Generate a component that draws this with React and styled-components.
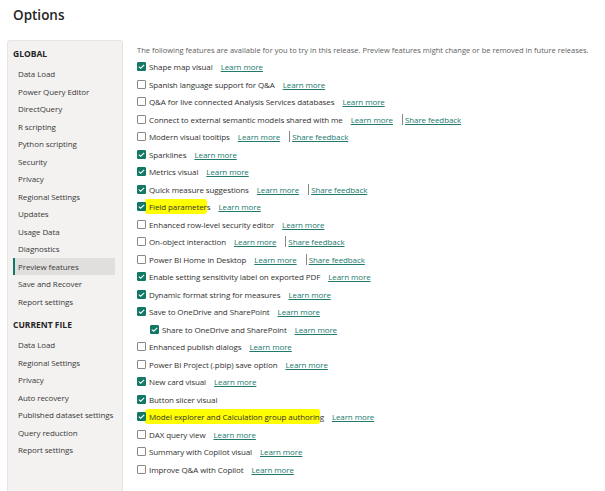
import styled, { createGlobalStyle } from "styled-components";

const GlobalStyle = createGlobalStyle`
  body {
    margin: 0;
    background: #ffffff;
    font-family: "Open Sans", "Noto Sans", sans-serif;
  }
`;

const globalItems = [
  "Data Load",
  "Power Query Editor",
  "DirectQuery",
  "R scripting",
  "Python scripting",
  "Security",
  "Privacy",
  "Regional Settings",
  "Updates",
  "Usage Data",
  "Diagnostics",
  "Preview features",
  "Save and Recover",
  "Report settings",
];

const fileItems = [
  "Data Load",
  "Regional Settings",
  "Privacy",
  "Auto recovery",
  "Published dataset settings",
  "Query reduction",
  "Report settings",
];

// on = checked, learn / feedback = links, indent = nested row, mark = highlighted part
const features = [
  { label: "Shape map visual", on: true, learn: true },
  { label: "Spanish language support for Q&A", learn: true },
  { label: "Q&A for live connected Analysis Services databases", learn: true },
  { label: "Connect to external semantic models shared with me", learn: true, feedback: true },
  { label: "Modern visual tooltips", learn: true, feedback: true },
  { label: "Sparklines", on: true, learn: true },
  { label: "Metrics visual", on: true, learn: true },
  { label: "Quick measure suggestions", on: true, learn: true, feedback: true },
  { label: "Field parameters", on: true, learn: true, mark: ["Field parameter", "s"] },
  { label: "Enhanced row-level security editor", learn: true },
  { label: "On-object interaction", learn: true, feedback: true },
  { label: "Power BI Home in Desktop", learn: true, feedback: true },
  { label: "Enable setting sensitivity label on exported PDF", on: true, learn: true },
  { label: "Dynamic format string for measures", on: true, learn: true },
  { label: "Save to OneDrive and SharePoint", on: true, learn: true },
  { label: "Share to OneDrive and SharePoint", on: true, learn: true, indent: true },
  { label: "Enhanced publish dialogs", learn: true },
  { label: "Power BI Project (.pbip) save option", learn: true },
  { label: "New card visual", on: true, learn: true },
  { label: "Button slicer visual", on: true },
  {
    label: "Model explorer and Calculation group authoring",
    on: true,
    learn: true,
    mark: ["Model explorer and Calculation group authorin", "g"],
  },
  { label: "DAX query view", learn: true },
  { label: "Summary with Copilot visual", learn: true },
  { label: "Improve Q&A with Copilot", learn: true },
];

const Page = styled.div`
  width: 605px;
  height: 491px;
  overflow: hidden;
  display: flex;
  flex-direction: column;
`;

const Title = styled.h1`
  margin: 0;
  height: 40px;
  padding: 5px 0 0 13px;
  box-sizing: border-box;
  font-size: 13.5px;
  font-weight: 600;
  color: #252423;
  line-height: 20px;
`;

const Body = styled.div`
  flex: 1;
  display: flex;
  min-height: 0;
`;

const Sidebar = styled.nav`
  width: 116px;
  margin-left: 7px;
  flex-shrink: 0;
  background: #f3f2f1;
  border: 1px solid #e6e5e4;
  border-radius: 3px 3px 0 0;
  box-sizing: border-box;
  padding-top: 4px;
  height: 470px;
`;

const SectionHead = styled.div`
  font-size: 8.5px;
  font-weight: 700;
  color: #252423;
  padding-left: 5px;
  height: 18px;
  line-height: 18px;
  margin-top: ${(p) => p.$top || 0}px;
  margin-bottom: 2px;
`;

const NavItem = styled.div`
  margin-left: 5px;
  margin-right: 7px;
  height: 17.5px;
  line-height: 17.5px;
  font-size: 8px;
  letter-spacing: -0.1px;
  white-space: nowrap;
  color: #3b3a39;
  padding-left: ${(p) => (p.$active ? 3 : 5)}px;
  background: ${(p) => (p.$active ? "#e1dfdd" : "transparent")};
  border-left: ${(p) => (p.$active ? "2px solid #117865" : "none")};
`;

const Main = styled.main`
  flex: 1;
  padding: 2px 0 0 14px;
`;

const Intro = styled.p`
  margin: 0;
  height: 16px;
  line-height: 16px;
  font-size: 7.5px;
  color: #605e5c;
  white-space: nowrap;
`;

const Row = styled.div`
  height: 17.5px;
  display: flex;
  align-items: center;
  padding-left: ${(p) => (p.$indent ? 13 : 0)}px;
  font-size: 8px;
  letter-spacing: -0.1px;
  color: #323130;
  white-space: nowrap;
`;

const Box = styled.span`
  width: 9px;
  height: 9px;
  flex-shrink: 0;
  box-sizing: border-box;
  border: 1px solid ${(p) => (p.$on ? "#117865" : "#8a8886")};
  background: ${(p) => (p.$on ? "#117865" : "#fff")};
  border-radius: 1px;
  margin-right: 3px;
  display: flex;
  align-items: center;
  justify-content: center;
  position: relative;
  z-index: 1;
`;

const Label = styled.span`
  margin-right: 8px;
`;

const Mark = styled.span`
  background: #ffff00;
  margin-left: -4px;
  padding-left: 4px;
  padding-top: 2px;
  padding-bottom: 2px;
  border-radius: 3px;
`;

const Link = styled.a`
  color: #227a6d;
  text-decoration: underline;
  text-underline-offset: 1px;
  cursor: pointer;
`;

const Divider = styled.span`
  width: 1px;
  height: 11px;
  background: #8a8886;
  margin: 0 2px 0 9px;
`;

const Check = () => (
  <svg width="7" height="5" viewBox="0 0 7 5">
    <path d="M0.8 2.6 L2.7 4.2 L6.2 0.8" fill="none" stroke="#fff" strokeWidth="1.1" />
  </svg>
);

const Feature = ({ f }) => (
  <Row $indent={f.indent}>
    <Box $on={f.on}>{f.on && <Check />}</Box>
    <Label>
      {f.mark ? (
        <>
          <Mark>{f.mark[0]}</Mark>
          {f.mark[1]}
        </>
      ) : (
        f.label
      )}
    </Label>
    {f.learn && <Link>Learn more</Link>}
    {f.feedback && (
      <>
        <Divider />
        <Link>Share feedback</Link>
      </>
    )}
  </Row>
);

export default function App() {
  return (
    <Page>
      <GlobalStyle />
      <Title>Options</Title>
      <Body>
        <Sidebar>
          <SectionHead>GLOBAL</SectionHead>
          {globalItems.map((it) => (
            <NavItem key={"g" + it} $active={it === "Preview features"}>
              {it}
            </NavItem>
          ))}
          <SectionHead $top={6}>CURRENT FILE</SectionHead>
          {fileItems.map((it) => (
            <NavItem key={"f" + it}>{it}</NavItem>
          ))}
        </Sidebar>
        <Main>
          <Intro>
            The following features are available for you to try in this release. Preview features
            might change or be removed in future releases.
          </Intro>
          {features.map((f) => (
            <Feature key={f.label} f={f} />
          ))}
        </Main>
      </Body>
    </Page>
  );
}
